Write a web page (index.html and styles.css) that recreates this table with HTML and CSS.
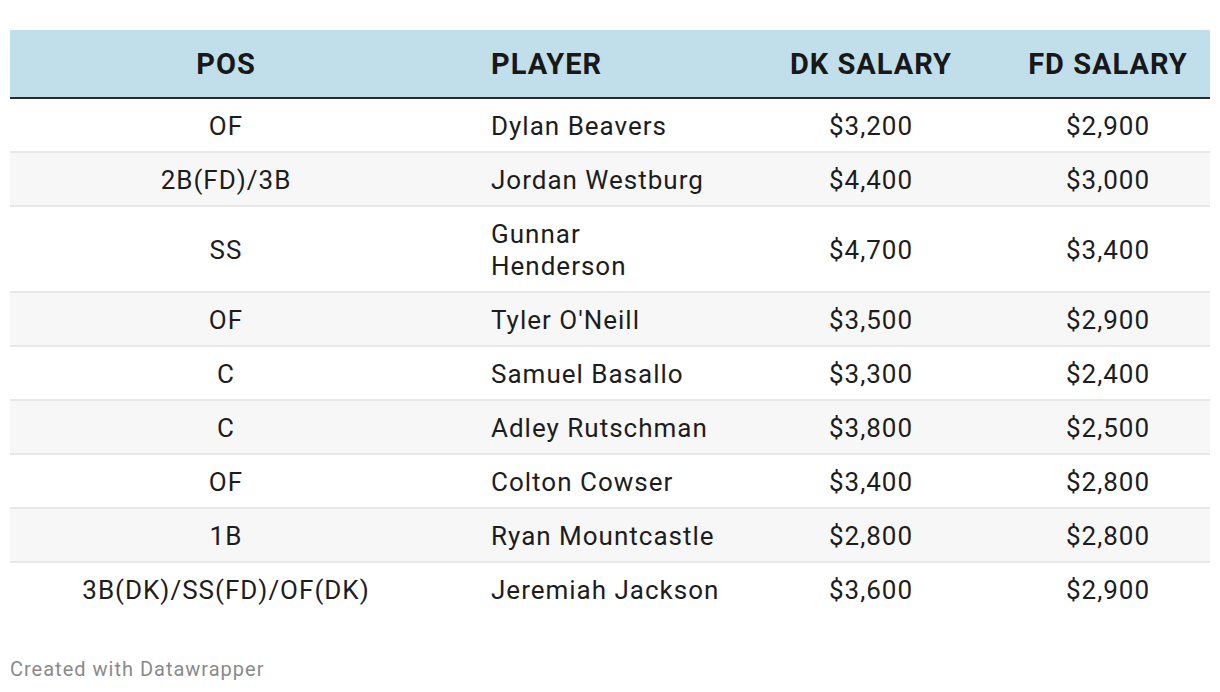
FILE: index.html
```html
<!DOCTYPE html>
<html lang="en">
<head>
<meta charset="utf-8">
<title>Salaries</title>
<link rel="stylesheet" href="styles.css">
</head>
<body>
<div class="wrap">
<table class="tbl">
  <colgroup>
    <col class="c-pos"><col class="c-player"><col class="c-dk"><col class="c-fd">
  </colgroup>
  <thead>
    <tr><th class="center">POS</th><th class="left">PLAYER</th><th class="center">DK SALARY</th><th class="center">FD SALARY</th></tr>
  </thead>
  <tbody>
    <tr><td class="center">OF</td><td class="left">Dylan Beavers</td><td class="center">$3,200</td><td class="center">$2,900</td></tr>
    <tr><td class="center">2B(FD)/3B</td><td class="left">Jordan Westburg</td><td class="center">$4,400</td><td class="center">$3,000</td></tr>
    <tr><td class="center">SS</td><td class="left">Gunnar<br>Henderson</td><td class="center">$4,700</td><td class="center">$3,400</td></tr>
    <tr><td class="center">OF</td><td class="left">Tyler O'Neill</td><td class="center">$3,500</td><td class="center">$2,900</td></tr>
    <tr><td class="center">C</td><td class="left">Samuel Basallo</td><td class="center">$3,300</td><td class="center">$2,400</td></tr>
    <tr><td class="center">C</td><td class="left">Adley Rutschman</td><td class="center">$3,800</td><td class="center">$2,500</td></tr>
    <tr><td class="center">OF</td><td class="left">Colton Cowser</td><td class="center">$3,400</td><td class="center">$2,800</td></tr>
    <tr><td class="center">1B</td><td class="left">Ryan Mountcastle</td><td class="center">$2,800</td><td class="center">$2,800</td></tr>
    <tr><td class="center">3B(DK)/SS(FD)/OF(DK)</td><td class="left">Jeremiah Jackson</td><td class="center">$3,600</td><td class="center">$2,900</td></tr>
  </tbody>
</table>
<div class="footer">Created with Datawrapper</div>
</div>
</body>
</html>
```
FILE: styles.css
```css
html, body {
  margin: 0;
  padding: 0;
  background: #ffffff;
}
body {
  font-family: Roboto, "Liberation Sans", sans-serif;
  color: #1d1d1d;
  letter-spacing: 1px;
}
.wrap {
  padding: 30px 10px 0 10px;
}
.tbl {
  width: 1200px;
  border-collapse: collapse;
  table-layout: fixed;
}
.c-pos { width: 432px; }
.c-player { width: 294px; }
.c-dk { width: 270px; }
.c-fd { width: 204px; }
.tbl th {
  background: #c1dfeb;
  font-size: 29px;
  font-weight: 700;
  color: #181818;
  height: 68px;
  padding: 0;
  border-bottom: 2px solid #2b2b2b;
  line-height: 32px;
  box-sizing: border-box;
}
.tbl td {
  font-size: 26px;
  line-height: 32px;
  padding: 11px 0 9px 0;
  border-bottom: 2px solid #e8e8e8;
  white-space: nowrap;
}
.tbl tbody tr:nth-child(even) td {
  background: #f7f7f7;
}
.tbl tbody tr:last-child td {
  border-bottom: none;
}
.center { text-align: center; }
.tbl td.left,
.tbl th.left { text-align: left; padding-left: 49px; }
.footer {
  margin-top: 42px;
  font-size: 20px;
  color: #8a8a8a;
}
```
